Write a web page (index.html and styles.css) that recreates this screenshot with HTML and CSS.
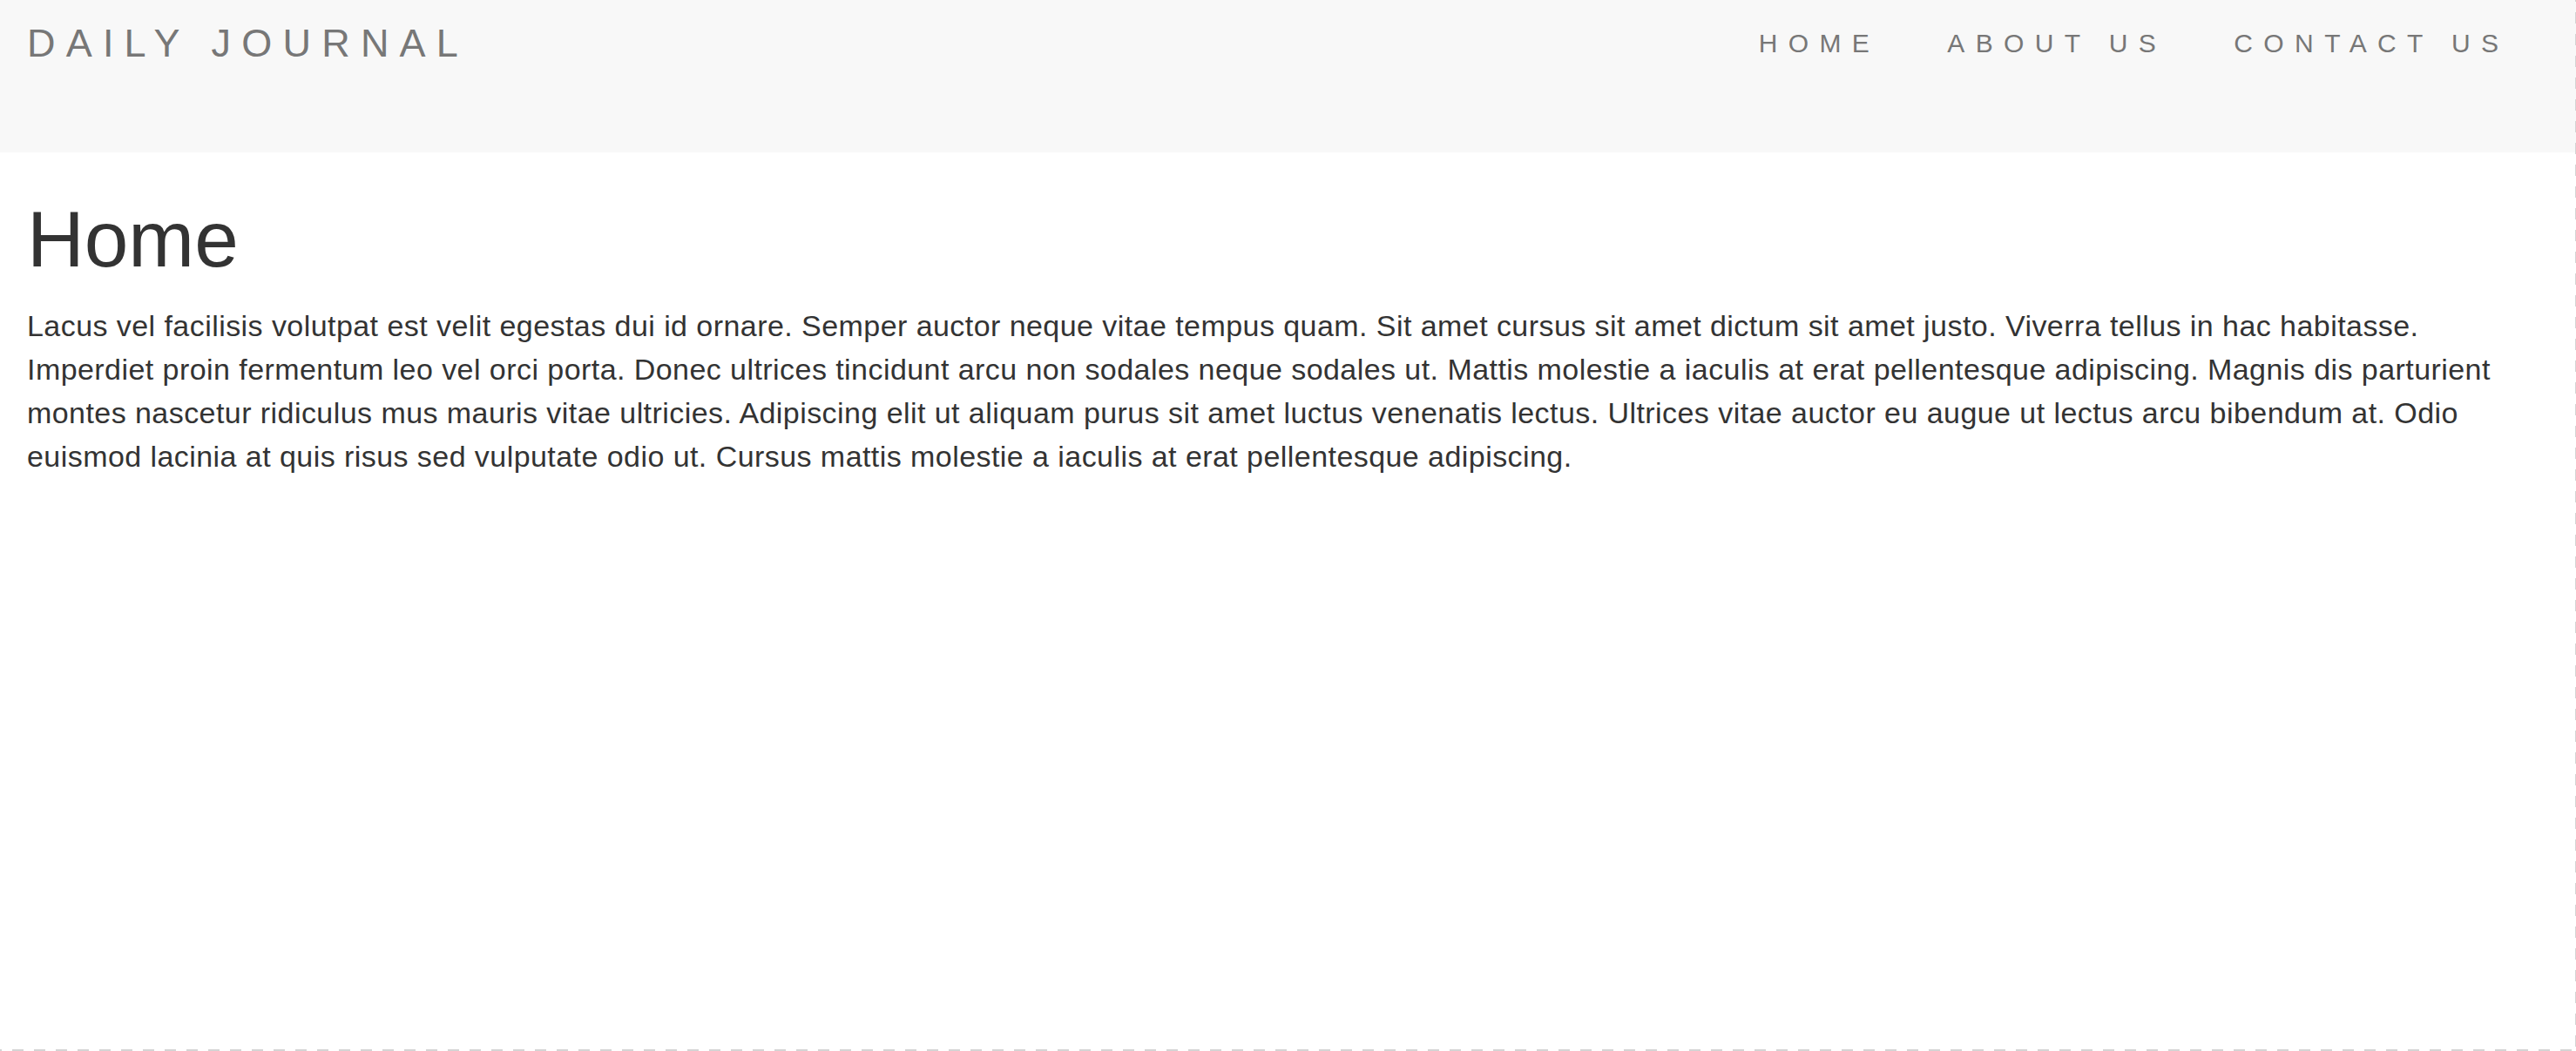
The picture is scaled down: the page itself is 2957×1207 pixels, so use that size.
FILE: index.html
```html
<!DOCTYPE html>
<html lang="en">
<head>
<meta charset="utf-8">
<title>Daily Journal</title>
<link rel="stylesheet" href="styles.css">
</head>
<body>
<header class="navbar">
  <div class="bar">
    <a class="brand" href="#">DAILY JOURNAL</a>
    <nav>
      <ul class="nav-links">
        <li><a href="#">HOME</a></li>
        <li><a href="#">ABOUT US</a></li>
        <li><a href="#">CONTACT US</a></li>
      </ul>
    </nav>
  </div>
</header>
<main class="content">
  <h1 class="title">Home</h1>
  <p class="text">Lacus vel facilisis volutpat est velit egestas dui id ornare. Semper auctor neque vitae tempus quam. Sit amet cursus sit amet dictum sit amet justo. Viverra tellus in hac habitasse. Imperdiet proin fermentum leo vel orci porta. Donec ultrices tincidunt arcu non sodales neque sodales ut. Mattis molestie a iaculis at erat pellentesque adipiscing. Magnis dis parturient montes nascetur ridiculus mus mauris vitae ultricies. Adipiscing elit ut aliquam purus sit amet luctus venenatis lectus. Ultrices vitae auctor eu augue ut lectus arcu bibendum at. Odio euismod lacinia at quis risus sed vulputate odio ut. Cursus mattis molestie a iaculis at erat pellentesque adipiscing.</p>
</main>
</body>
</html>
```

FILE: styles.css
```css
* { box-sizing: border-box; }

html, body {
  margin: 0;
  padding: 0;
}

body {
  font-family: "Liberation Sans", Arial, sans-serif;
  color: #333;
  background: #fff;
  min-height: 1207px;
}

body::after {
  content: "";
  position: fixed;
  inset: 0;
  pointer-events: none;
  background:
    repeating-linear-gradient(to bottom, #d4d4d4 0 2px, transparent 2px 14px, #d4d4d4 14px 25px) right top / 1px 100% no-repeat,
    repeating-linear-gradient(to right, #d4d4d4 0 2px, transparent 2px 14px, #d4d4d4 14px 25px) left bottom / 100% 2px no-repeat;
}

.navbar {
  height: 175px;
  background: #f8f8f8;
  padding: 24px 38px 0 31px;
}

.bar {
  display: flex;
  align-items: center;
  justify-content: space-between;
}

.brand {
  font-size: 45px;
  letter-spacing: 12.2px;
  color: #777;
  text-decoration: none;
  line-height: normal;
}

.nav-links {
  display: flex;
  list-style: none;
  margin: 0;
  padding: 0;
}

.nav-links a {
  display: block;
  padding: 0 38.5px;
  font-size: 30px;
  letter-spacing: 12.4px;
  color: #777;
  text-decoration: none;
  line-height: normal;
}

.content {
  padding: 0 31px;
}

.title {
  margin: 50px 0 24px;
  font-size: 91px;
  font-weight: 400;
  line-height: 1.1;
  color: #333;
}

.text {
  margin: 0;
  font-size: 34px;
  letter-spacing: 0.44px;
  line-height: 50px;
  color: #333;
}
```
